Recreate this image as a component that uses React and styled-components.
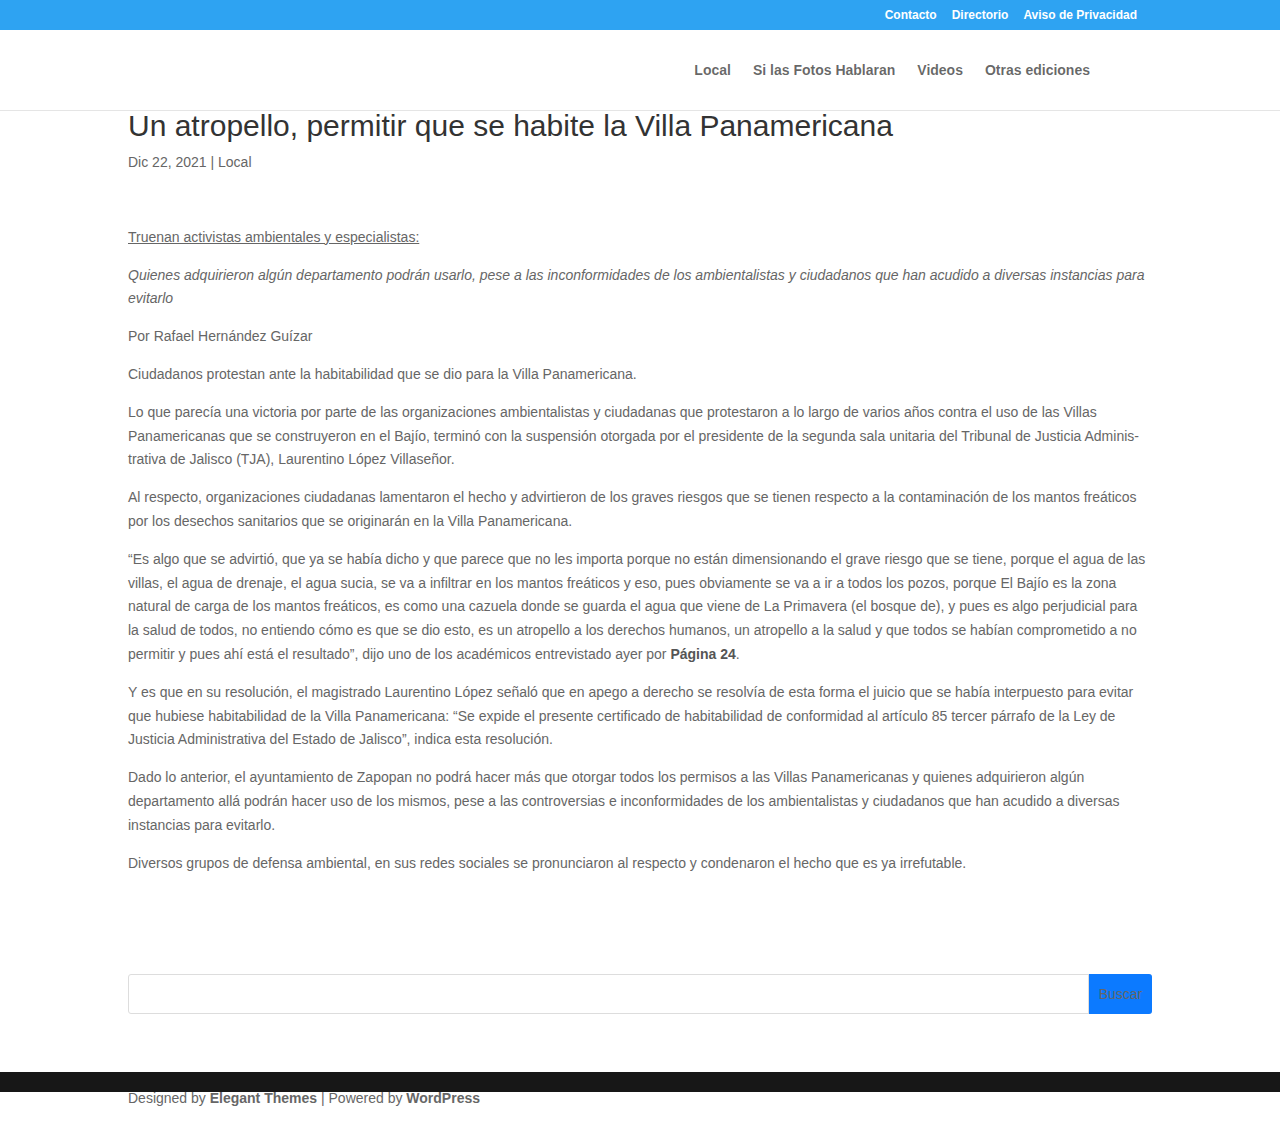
import React from 'react'
import styled, { createGlobalStyle } from 'styled-components';

const GlobalStyle = createGlobalStyle`
    body {
        margin: 0;
        background: #fff;
        font-family: "Liberation Sans", Arial, sans-serif;
        font-size: 14px;
        color: #666;
    }
`;

const TopBar = styled.div`
    background: #2ea3f2;
    height: 30px;
    display: flex;
    justify-content: flex-end;
    align-items: center;
    padding-right: 143px;
`;

const TopLink = styled.a`
    color: #fff;
    font-size: 12px;
    font-weight: bold;
    text-decoration: none;
    margin-left: 15px;
`;

const Header = styled.header`
    height: 80px;
    border-bottom: 1px solid #e5e5e5;
    display: flex;
    justify-content: flex-end;
    align-items: center;
    padding-right: 190px;
`;

const NavLink = styled.a`
    color: rgba(0, 0, 0, 0.6);
    font-size: 14px;
    font-weight: bold;
    text-decoration: none;
    margin-left: 22px;
`;

const Main = styled.main`
    width: 1024px;
    margin: 0 auto;
`;

const Title = styled.h1`
    margin: 0;
    font-size: 30px;
    line-height: 30px;
    font-weight: 500;
    color: #333;
`;

const Meta = styled.div`
    margin-top: 10px;
    line-height: 23.8px;
    color: #666;
`;

const Content = styled.div`
    padding-top: 51px;
    padding-bottom: 71px;
`;

const P = styled.p`
    margin: 0;
    padding-bottom: 14px;
    line-height: 23.8px;
    font-style: ${props => props.italic ? 'italic' : 'normal'};
    text-decoration: ${props => props.underline ? 'underline' : 'none'};
    b { color: #555; }
`;

const SearchRow = styled.form`
    display: flex;
    height: 40px;
    border: 1px solid #ddd;
    border-radius: 3px;
    box-sizing: border-box;
    margin-top: 14px;
    margin-bottom: 58px;
`;

const SearchInput = styled.input`
    flex: 1;
    border: none;
    outline: none;
    background: transparent;
    font-family: inherit;
`;

const SearchButton = styled.button`
    width: 64px;
    margin: -1px -1px -1px 0;
    border: none;
    border-left: 1px solid #ddd;
    border-radius: 0 3px 3px 0;
    background: #0c7aff;
    color: #666;
    font-family: "Liberation Sans", Arial, sans-serif;
    font-size: 14px;
`;

const FooterBar = styled.div`
    background: #171717;
    height: 20px;
`;

const FooterText = styled.div`
    width: 1024px;
    margin: 0 auto;
    line-height: 13px;
    padding-bottom: 16px;
    color: #666;
    b { color: #666; }
`;

export default function App() {
    return (
        <>
            <GlobalStyle />
            <TopBar>
                <TopLink href="#">Contacto</TopLink>
                <TopLink href="#">Directorio</TopLink>
                <TopLink href="#">Aviso de Privacidad</TopLink>
            </TopBar>
            <Header>
                <NavLink href="#">Local</NavLink>
                <NavLink href="#">Si las Fotos Hablaran</NavLink>
                <NavLink href="#">Videos</NavLink>
                <NavLink href="#">Otras ediciones</NavLink>
            </Header>
            <Main>
                <Title>Un atropello, permitir que se habite la Villa Panamericana</Title>
                <Meta>Dic 22, 2021 | Local</Meta>
                <Content>
                    <P underline>Truenan activistas ambientales y especialistas:</P>
                    <P italic>Quienes adquirieron algún departamento podrán usarlo, pese a las inconformidades de los ambientalistas y ciudadanos que han acudido a diversas instancias para evitarlo</P>
                    <P>Por Rafael Hernández Guízar</P>
                    <P>Ciudadanos protestan ante la habitabilidad que se dio para la Villa Panamericana.</P>
                    <P>Lo que parecía una victoria por parte de las organizaciones ambientalistas y ciudadanas que protestaron a lo largo de varios años contra el uso de las Villas Panamericanas que se construyeron en el Bajío, terminó con la suspensión otorgada por el presidente de la segunda sala unitaria del Tribunal de Justicia Adminis{'\u00AD'}trativa de Jalisco (TJA), Laurentino López Villaseñor.</P>
                    <P>Al respecto, organizaciones ciudadanas lamentaron el hecho y advirtieron de los graves riesgos que se tienen respecto a la contaminación de los mantos freáticos por los desechos sanitarios que se originarán en la Villa Panamericana.</P>
                    <P>“Es algo que se advirtió, que ya se había dicho y que parece que no les importa porque no están dimensionando el grave riesgo que se tiene, porque el agua de las villas, el agua de drenaje, el agua sucia, se va a infiltrar en los mantos freáticos y eso, pues obviamente se va a ir a todos los pozos, porque El Bajío es la zona natural de carga de los mantos freáticos, es como una cazuela donde se guarda el agua que viene de La Primavera (el bosque de), y pues es algo perjudicial para la salud de todos, no entiendo cómo es que se dio esto, es un atropello a los derechos humanos, un atropello a la salud y que todos se habían comprometido a no permitir y pues ahí está el resultado”, dijo uno de los académicos entrevistado ayer por <b>Página 24</b>.</P>
                    <P>Y es que en su resolución, el magistrado Laurentino López señaló que en apego a derecho se resolvía de esta forma el juicio que se había interpuesto para evitar que hubiese habitabilidad de la Villa Panamericana: “Se expide el presente certificado de habitabilidad de conformidad al artículo 85 tercer párrafo de la Ley de Justicia Administrativa del Estado de Jalisco”, indica esta resolución.</P>
                    <P>Dado lo anterior, el ayuntamiento de Zapopan no podrá hacer más que otorgar todos los permisos a las Villas Panamericanas y quienes adquirieron algún departamento allá podrán hacer uso de los mismos, pese a las controversias e inconformidades de los ambientalistas y ciudadanos que han acudido a diversas instancias para evitarlo.</P>
                    <P>Diversos grupos de defensa ambiental, en sus redes sociales se pronunciaron al respecto y condenaron el hecho que es ya irrefutable.</P>
                </Content>
                <SearchRow onSubmit={e => e.preventDefault()}>
                    <SearchInput type="text" />
                    <SearchButton type="submit">Buscar</SearchButton>
                </SearchRow>
            </Main>
            <FooterBar />
            <FooterText>
                Designed by <b>Elegant Themes</b> | Powered by <b>WordPress</b>
            </FooterText>
        </>
    )
}
